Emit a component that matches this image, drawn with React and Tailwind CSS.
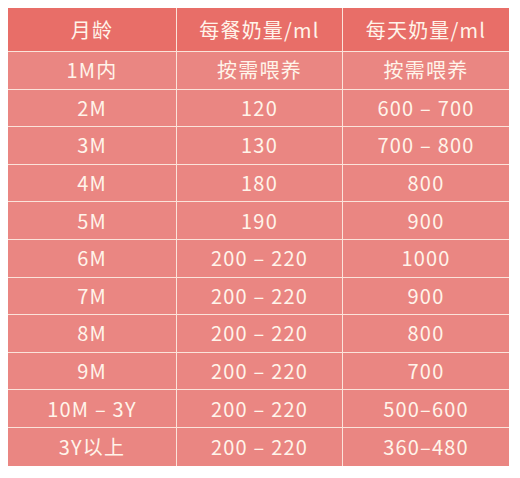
import React from "react";

const rows = [
  ["1M内", "按需喂养", "按需喂养"],
  ["2M", "120", "600 – 700"],
  ["3M", "130", "700 – 800"],
  ["4M", "180", "800"],
  ["5M", "190", "900"],
  ["6M", "200 – 220", "1000"],
  ["7M", "200 – 220", "900"],
  ["8M", "200 – 220", "800"],
  ["9M", "200 – 220", "700"],
  ["10M – 3Y", "200 – 220", "500–600"],
  ["3Y以上", "200 – 220", "360–480"],
];

const font = {
  fontFamily: '"Noto Sans CJK SC", "Noto Sans", sans-serif',
};

const App = () => {
  return (
    <div className="w-[520px] h-[478px] bg-white pt-[8px] pl-[8px]" style={font}>
      <div className="w-[501px] text-[#fff4ea] text-[20px] tracking-[1.2px]">
        {/* header */}
        <div className="flex h-[44px] bg-[#e86e68] border-b border-[#fbe3da]">
          <div className="w-[168px] flex items-center justify-center">月龄</div>
          <div className="w-[166px] flex items-center justify-center border-l border-[#fbe3da]">每餐奶量/ml</div>
          <div className="flex-1 flex items-center justify-center border-l border-[#fbe3da]">每天奶量/ml</div>
        </div>

        {rows.map((r, i) => (
          <div
            key={i}
            className={
              "flex h-[37.6px] bg-[#ea8682] " +
              (i < rows.length - 1 ? "border-b border-[#fbe3da]" : "")
            }
          >
            <div className="w-[168px] flex items-center justify-center">{r[0]}</div>
            <div className="w-[166px] flex items-center justify-center border-l border-[#fbe3da]">{r[1]}</div>
            <div className="flex-1 flex items-center justify-center border-l border-[#fbe3da]">{r[2]}</div>
          </div>
        ))}
      </div>
    </div>
  );
};

export default App;
